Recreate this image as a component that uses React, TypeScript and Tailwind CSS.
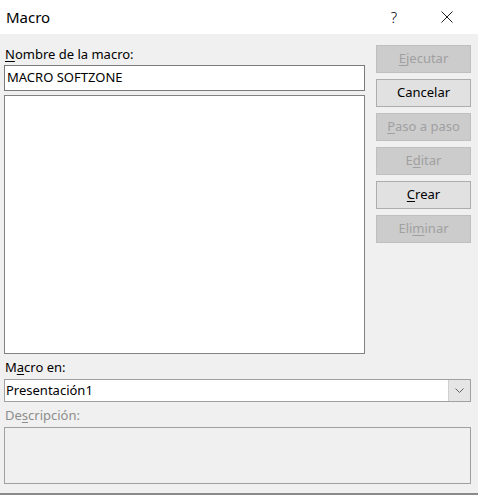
import React from "react";

const font = { fontFamily: "'Noto Sans', 'Open Sans', sans-serif" };

function Btn({ label, u, enabled }: { label: string; u: number; enabled?: boolean }) {
  const content =
    u < 0 ? (
      <span>{label}</span>
    ) : (
      <span>
        {label.slice(0, u)}
        <span className="underline underline-offset-2">{label.slice(u, u + 1)}</span>
        {label.slice(u + 1)}
      </span>
    );
  return (
    <div
      className={
        "h-[28px] w-[95px] flex items-center justify-center text-[13px] border " +
        (enabled
          ? "bg-[#e1e1e1] border-[#adadad] text-black"
          : "bg-[#cccccc] border-[#bfbfbf] text-[#a0a0a0]")
      }
    >
      {content}
    </div>
  );
}

export default function App() {
  return (
    <div className="w-[478px] h-[495px] bg-[#f0f0f0] flex flex-col overflow-hidden" style={font}>
      <div className="h-[34px] bg-white flex items-center shrink-0">
        <span className="ml-[6px] text-[15px] text-black">Macro</span>
        <span className="ml-auto text-[15px] font-light text-black mr-[44px]">?</span>
        <svg width="12" height="12" viewBox="0 0 12 12" className="mr-[25px]">
          <path d="M0.5 0.5 L11.5 11.5 M11.5 0.5 L0.5 11.5" stroke="#222" strokeWidth="1" />
        </svg>
      </div>
      <div className="flex pl-[4px] pr-[7px] pt-[11px] shrink-0">
        <div className="w-[362px] flex flex-col">
          <div className="text-[13px] leading-[18px] pl-[1px] text-black">
            <span className="underline underline-offset-2">N</span>ombre de la macro:
          </div>
          <div className="mt-[2px] h-[26px] bg-white border border-[#7a7a7a] flex items-center px-[2px] text-[13px] text-black">
            MACRO SOFTZONE
          </div>
          <div className="mt-[4px] h-[259px] bg-white border border-[#828282]" />
        </div>
        <div className="ml-[11px] flex flex-col gap-[6px]">
          <Btn label="Ejecutar" u={0} />
          <Btn label="Cancelar" u={-1} enabled />
          <Btn label="Paso a paso" u={0} />
          <Btn label="Editar" u={1} />
          <Btn label="Crear" u={0} enabled />
          <Btn label="Eliminar" u={3} />
        </div>
      </div>
      <div className="px-[4px] pr-[7px] flex flex-col shrink-0">
        <div className="mt-[4px] text-[13px] leading-[18px] pl-[1px] text-black">
          M<span className="underline underline-offset-2">a</span>cro en:
        </div>
        <div className="mt-[3px] h-[23px] bg-white border border-[#a0a0a0] flex items-center text-[13px] text-black">
          <span className="pl-[1px] flex-1">Presentación1</span>
          <div className="w-[22px] h-full bg-[#e5e5e5] border-l border-[#cfcfcf] flex items-center justify-center">
            <svg width="9" height="5" viewBox="0 0 9 5">
              <path d="M0.5 0.5 L4.5 4.5 L8.5 0.5" stroke="#606060" strokeWidth="1" fill="none" />
            </svg>
          </div>
        </div>
        <div className="mt-[4px] text-[13px] leading-[18px] pl-[1px] text-[#8d8d8d]">
          De<span className="underline underline-offset-2">s</span>cripción:
        </div>
        <div className="mt-[3px] h-[57px] bg-[#f0f0f0] border border-[#a0a0a0]" />
      </div>
      <div className="mt-[9px] h-[2px] bg-[#8a8a8a] shrink-0" />
      <div className="flex-1 bg-[#c8c8c8]" />
    </div>
  );
}
